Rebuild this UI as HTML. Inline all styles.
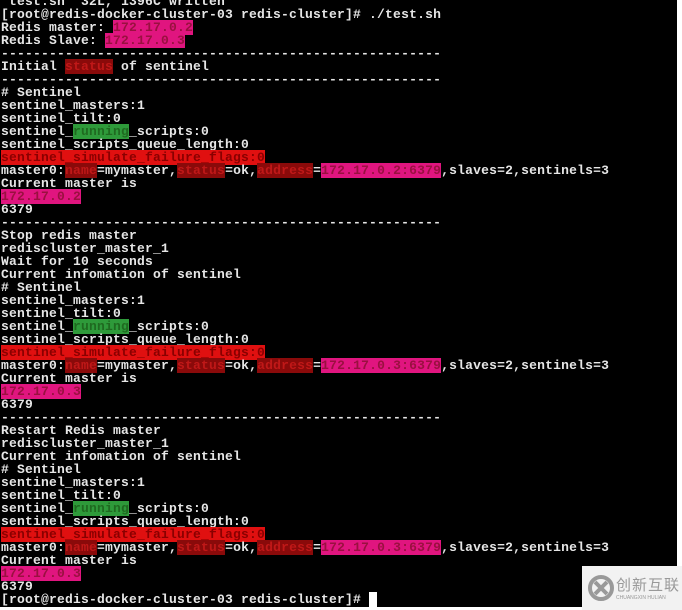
<!DOCTYPE html>
<html><head><meta charset="utf-8"><style>
html,body{margin:0;padding:0;background:#fff;width:682px;height:610px;overflow:hidden}
#t{position:absolute;left:0;top:0;width:677px;height:607px;background:#000}
pre{margin:0;position:absolute;left:1px;top:-5px;font-family:"Liberation Mono",monospace;font-size:13px;letter-spacing:0.2px;line-height:13px;color:#e6e6e6;font-weight:bold}
.p{background:#e0157f;color:#9a1040}
.d{background:#8a0a0a;color:#c01818}
.g{background:#2e9a3a;color:#1f6a20}
.r{background:#e01010;color:#8a0000}
.cur{background:#fff;color:#fff}
#wm{position:absolute;left:582px;top:566px;width:100px;height:44px;background:#f2f2f2;font-family:"Noto Sans CJK SC",sans-serif;color:#999}
</style></head><body>
<div id="t"><pre>"test.sh" 32L, 1396C written
[root@redis-docker-cluster-03 redis-cluster]# ./test.sh
Redis master: <span class="p">172.17.0.2</span>
Redis Slave: <span class="p">172.17.0.3</span>
-------------------------------------------------------
Initial <span class="d">status</span> of sentinel
-------------------------------------------------------
# Sentinel
sentinel_masters:1
sentinel_tilt:0
sentinel_<span class="g">running</span>_scripts:0
sentinel_scripts_queue_length:0
<span class="r">sentinel_simulate_failure_flags:0</span>
master0:<span class="d">name</span>=mymaster,<span class="d">status</span>=ok,<span class="d">address</span>=<span class="p">172.17.0.2:6379</span>,slaves=2,sentinels=3
Current master is
<span class="p">172.17.0.2</span>
6379
-------------------------------------------------------
Stop redis master
rediscluster_master_1
Wait for 10 seconds
Current infomation of sentinel
# Sentinel
sentinel_masters:1
sentinel_tilt:0
sentinel_<span class="g">running</span>_scripts:0
sentinel_scripts_queue_length:0
<span class="r">sentinel_simulate_failure_flags:0</span>
master0:<span class="d">name</span>=mymaster,<span class="d">status</span>=ok,<span class="d">address</span>=<span class="p">172.17.0.3:6379</span>,slaves=2,sentinels=3
Current master is
<span class="p">172.17.0.3</span>
6379
-------------------------------------------------------
Restart Redis master
rediscluster_master_1
Current infomation of sentinel
# Sentinel
sentinel_masters:1
sentinel_tilt:0
sentinel_<span class="g">running</span>_scripts:0
sentinel_scripts_queue_length:0
<span class="r">sentinel_simulate_failure_flags:0</span>
master0:<span class="d">name</span>=mymaster,<span class="d">status</span>=ok,<span class="d">address</span>=<span class="p">172.17.0.3:6379</span>,slaves=2,sentinels=3
Current master is
<span class="p">172.17.0.3</span>
6379
[root@redis-docker-cluster-03 redis-cluster]# <span class="cur">_</span></pre></div>
<div id="wm">
<svg width="30" height="30" viewBox="0 0 30 30" style="position:absolute;left:4px;top:7px"><circle cx="15" cy="15" r="11" fill="none" stroke="#999" stroke-width="4"/><path d="M9 9L21 21M21 9L9 21" stroke="#999" stroke-width="4"/></svg>
<div style="position:absolute;left:34px;top:8px;font-size:15px;letter-spacing:1px">创新互联</div>
<div style="position:absolute;left:34px;top:29px;font-size:5px;font-family:'Liberation Sans',sans-serif">CHUANGXIN HULIAN</div>
</div>
</body></html>
